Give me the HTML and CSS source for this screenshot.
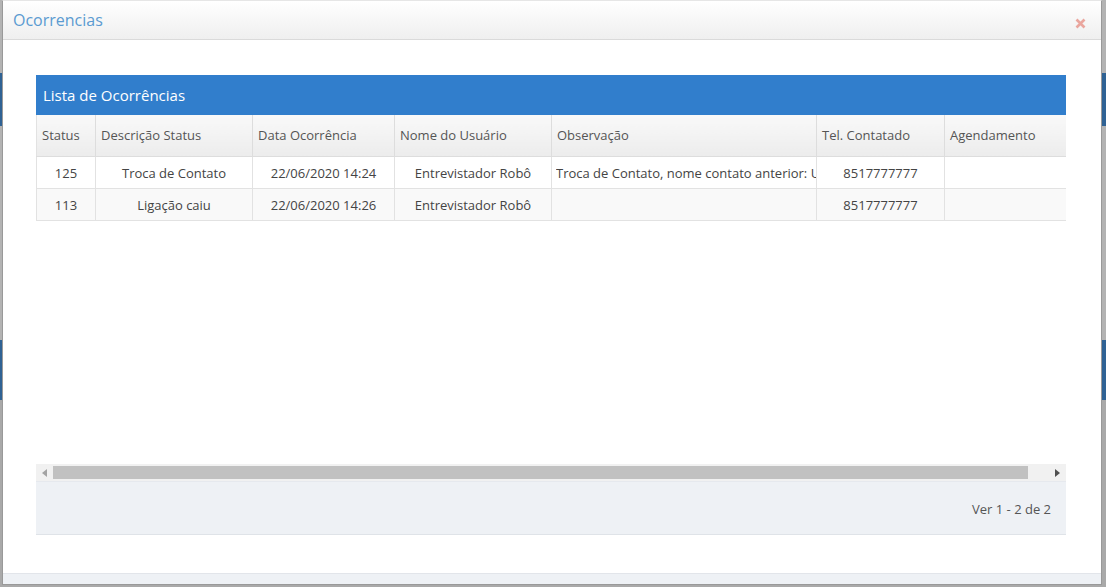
FILE: index.html
```html
<!DOCTYPE html>
<html lang="pt">
<head>
<meta charset="utf-8">
<title>Ocorrencias</title>
<link rel="stylesheet" href="styles.css">
</head>
<body>
<div class="modal">
  <div class="modal-header">
    <h4 class="modal-title">Ocorrencias</h4>
    <button class="close" aria-label="Fechar">
      <svg width="11" height="11" viewBox="0 0 11 11"><path d="M1.5 1.5 L9.5 9.5 M9.5 1.5 L1.5 9.5" stroke="#eaa69e" stroke-width="2.6" stroke-linecap="butt"/></svg>
    </button>
  </div>
  <div class="modal-body">
    <div class="grid">
      <div class="grid-caption">Lista de Ocorrências</div>
      <div class="grid-view">
        <table class="grid-table">
          <colgroup>
            <col class="c1"><col class="c2"><col class="c3"><col class="c4"><col class="c5"><col class="c6"><col class="c7">
          </colgroup>
          <thead>
            <tr>
              <th>Status</th>
              <th>Descrição Status</th>
              <th>Data Ocorrência</th>
              <th>Nome do Usuário</th>
              <th>Observação</th>
              <th>Tel. Contatado</th>
              <th>Agendamento</th>
            </tr>
          </thead>
          <tbody>
            <tr>
              <td>125</td>
              <td>Troca de Contato</td>
              <td>22/06/2020 14:24</td>
              <td>Entrevistador Robô</td>
              <td class="left"><div class="clip">Troca de Contato, nome contato anterior: Usuário</div></td>
              <td>8517777777</td>
              <td></td>
            </tr>
            <tr class="alt">
              <td>113</td>
              <td>Ligação caiu</td>
              <td>22/06/2020 14:26</td>
              <td>Entrevistador Robô</td>
              <td class="left"></td>
              <td>8517777777</td>
              <td></td>
            </tr>
          </tbody>
        </table>
      </div>
      <div class="hscroll">
        <div class="arrow">
          <svg width="5" height="8" viewBox="0 0 5 8"><path d="M5 0 L0 4 L5 8 Z" fill="#a3a3a3"/></svg>
        </div>
        <div class="track"><div class="thumb"></div></div>
        <div class="arrow">
          <svg width="5" height="8" viewBox="0 0 5 8"><path d="M0 0 L5 4 L0 8 Z" fill="#505050"/></svg>
        </div>
      </div>
      <div class="pager">Ver 1 - 2 de 2</div>
    </div>
  </div>
  <div class="modal-footer"></div>
</div>
</body>
</html>
```
FILE: styles.css
```css
html, body {
  margin: 0;
  padding: 0;
  height: 100%;
}
body {
  font-family: "Open Sans", "Liberation Sans", sans-serif;
  background:
    linear-gradient(to bottom,
      #b3b3b3 0, #b3b3b3 73px,
      #2f6294 73px, #2f6294 126px,
      #b3b3b3 126px, #b3b3b3 340px,
      #2f6294 340px, #2f6294 400px,
      #a9a9a9 400px, #a9a9a9 100%);
  overflow: hidden;
}
.modal {
  position: fixed;
  left: 2px;
  top: 0;
  width: 1098px;
  height: 583px;
  background: #fff;
  border: 1px solid #999;
  border-top-color: #e6e6e6;
  display: flex;
  flex-direction: column;
}
.modal-header {
  height: 38px;
  flex: none;
  background: linear-gradient(to bottom, #ffffff 0%, #efefef 100%);
  border-bottom: 1px solid #dadada;
  display: flex;
  align-items: center;
  justify-content: space-between;
  padding: 0 15px 0 10px;
}
.modal-title {
  margin: 0;
  font-weight: 400;
  font-size: 16px;
  color: #5b9bd1;
  line-height: 20px;
}
.close {
  border: 0;
  background: transparent;
  padding: 0;
  width: 11px;
  height: 11px;
  display: flex;
  position: relative;
  top: 3px;
}
.modal-body {
  flex: 1;
  padding: 35px 35px 0 33px;
}
.grid {
  width: 1030px;
}
.grid-caption {
  height: 40px;
  background: #317ecc;
  color: #fff;
  font-size: 15px;
  line-height: 40px;
  padding-left: 7px;
}
.grid-view {
  height: 349px;
  overflow: hidden;
  background: #fff;
}
.grid-table {
  table-layout: fixed;
  width: 1052px;
  border-collapse: collapse;
  font-size: 13px;
}
.c1 { width: 59px; }
.c2 { width: 157px; }
.c3 { width: 142px; }
.c4 { width: 157px; }
.c5 { width: 265px; }
.c6 { width: 128px; }
.c7 { width: 144px; }
.grid-table th {
  height: 39px;
  padding: 0 5px 2px;
  text-align: left;
  font-weight: 400;
  color: #555;
  background: linear-gradient(to bottom, #f9f9f9 0%, #ececec 100%);
  border-left: 1px solid #dddddd;
  border-bottom: 1px solid #dddddd;
  white-space: nowrap;
  overflow: hidden;
}
.grid-table th:first-child,
.grid-table td:first-child {
  border-left: 1px solid #e2e2e2;
}
.grid-table td {
  height: 31px;
  padding: 0 4px;
  text-align: center;
  color: #444;
  border-left: 1px solid #e2e2e2;
  border-bottom: 1px solid #e2e2e2;
  white-space: nowrap;
  overflow: hidden;
  text-overflow: clip;
}
.grid-table td.left {
  text-align: left;
  padding-right: 0;
}
.clip {
  overflow: hidden;
  white-space: nowrap;
  text-overflow: clip;
}
.grid-table tr.alt td {
  background: #f9f9f9;
}
.hscroll {
  height: 17px;
  display: flex;
  background: #f1f1f1;
}
.arrow {
  width: 17px;
  flex: none;
  display: flex;
  align-items: center;
  justify-content: center;
}
.track {
  flex: 1;
  display: flex;
  align-items: center;
}
.thumb {
  width: 975px;
  height: 13px;
  background: #c1c1c1;
}
.pager {
  height: 52px;
  background: #eef1f5;
  border-top: 1px solid #e6e9ee;
  border-bottom: 1px solid #dfe3e8;
  text-align: right;
  padding-right: 15px;
  font-size: 13px;
  line-height: 54px;
  color: #555;
}
.modal-footer {
  height: 10px;
  flex: none;
  background: #eef1f5;
  border-top: 1px solid #e2e5ea;
}
```
